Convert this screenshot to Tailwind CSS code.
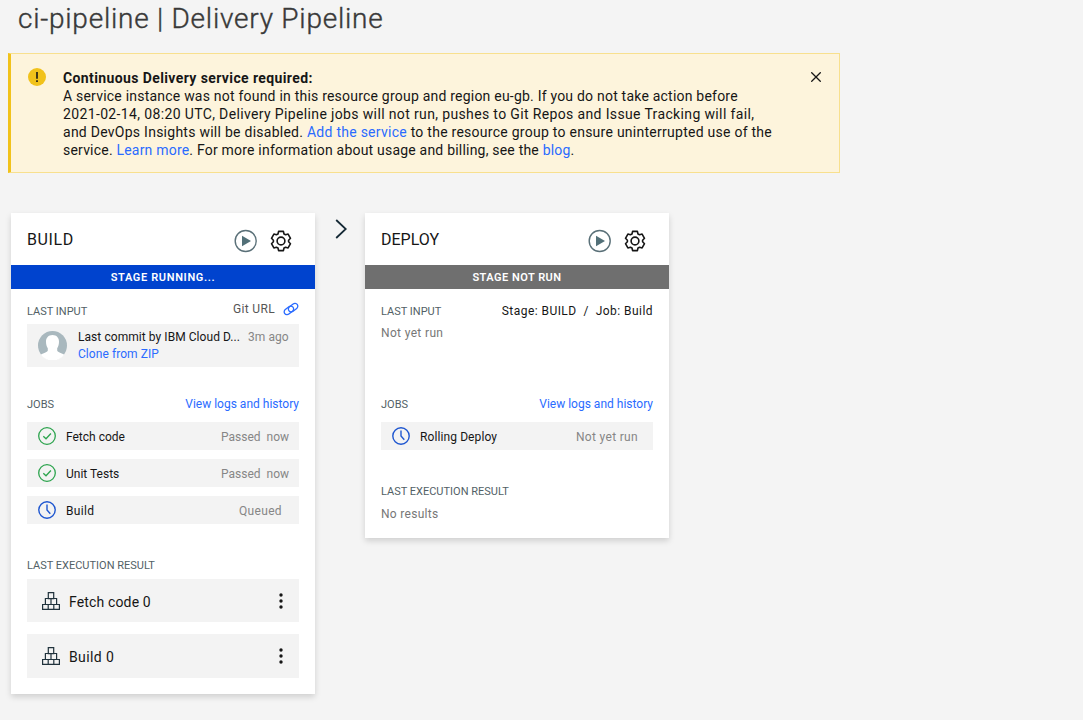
<!DOCTYPE html>
<html lang="en">
<head>
<meta charset="utf-8">
<title>ci-pipeline | Delivery Pipeline</title>
<script src="https://cdn.jsdelivr.net/npm/@tailwindcss/browser@4"></script>
</head>
<body class="h-[720px] overflow-hidden bg-[#f4f4f4] font-['Roboto',sans-serif] text-[#161616]">
<svg class="hidden">
  <symbol id="play" viewBox="0 0 24 24"><circle cx="11.700" cy="12" r="10.500" fill="none" stroke="#5a7078" stroke-width="1.400"/><path d="M8 6.800 17 12l-9 5.200z" fill="#527078"/></symbol>
  <symbol id="gear" viewBox="-12 -12 24 24"><g fill="none" stroke="#161616" stroke-width="1.600" stroke-linejoin="round"><path d="M-2.400-9.600H2.400L3-7 4.600-6.200 7.100-6.900 9.500-2.700 7.600-.8V.8L9.500 2.700 7.100 6.900 4.600 6.200 3 7 2.400 9.600H-2.400L-3 7-4.600 6.200-7.100 6.900-9.500 2.700-7.600.8V-.8L-9.500-2.700-7.100-6.900-4.600-6.200-3-7Z"/><circle r="3.900"/></g></symbol>
  <symbol id="check" viewBox="0 0 18 18"><g fill="none" stroke="#2da44e" stroke-width="1.300"><circle cx="9" cy="9" r="8.300"/><path d="M5.300 9.300 8 11.800 12.900 6.500"/></g></symbol>
  <symbol id="clock" viewBox="0 0 18 18"><g fill="none" stroke="#1f57d0" stroke-width="1.400"><circle cx="9" cy="9" r="8.200"/><path d="M9 3.500V9l3.300 3.700"/></g></symbol>
  <symbol id="boxes" viewBox="0 0 18 18"><path d="M6.300.6h5.400v6H6.300zM3.400 6.500H9v6H3.400zM9 6.500h5.600v6H9zM.6 12.500h5.600v4.900H.6zM6.200 12.500h5.600v4.900H6.200zM11.800 12.500h5.600v4.900h-5.600z" fill="none" stroke="#20323c" stroke-width="1.200"/></symbol>
  <symbol id="dots" viewBox="0 0 4 16"><g fill="#161616"><circle cx="2" cy="2" r="1.700"/><circle cx="2" cy="8" r="1.700"/><circle cx="2" cy="14" r="1.700"/></g></symbol>
</svg>

<h1 class="ml-[18px] h-[53px] pt-px text-[28px] leading-9 font-light tracking-[0.76px] text-[#393939] whitespace-nowrap [-webkit-text-stroke:0.4px]">ci-pipeline | Delivery Pipeline</h1>

<section class="ml-2 flex h-[120px] w-[832px] items-start border border-l-[3px] border-[#f8e08e] border-l-[#f1c21b] bg-[#fdf4dc]">
  <svg class="mt-3.5 ml-[17px] size-[18px] shrink-0" viewBox="0 0 18 18"><circle cx="9" cy="9" r="9" fill="#f1c21b"/><path d="M8.200 4h1.600v6.700H8.200zM8.200 12.300h1.600V14H8.200z" fill="#161616"/></svg>
  <div class="mt-[15px] ml-[17px] w-[735px] text-sm leading-[18px] whitespace-nowrap">
    <p class="font-bold tracking-[0.39px]">Continuous Delivery service required:</p>
    <p class="tracking-[0.215px]">A service instance was not found in this resource group and region eu-gb. If you do not take action before</p>
    <p class="tracking-[0.36px]">2021-02-14, 08:20 UTC, Delivery Pipeline jobs will not run, pushes to Git Repos and Issue Tracking will fail,</p>
    <p class="tracking-[0.26px]">and DevOps Insights will be disabled. <a class="text-[#2a6bff]">Add the service</a> to the resource group to ensure uninterrupted use of the</p>
    <p class="tracking-[0.205px]">service. <a class="text-[#2a6bff]">Learn more</a>. For more information about usage and billing, see the <a class="text-[#2a6bff]">blog</a>.</p>
  </div>
  <svg class="mt-[18px] ml-[13px] size-2.5" viewBox="0 0 10 10"><path d="m.3.3 9.400 9.400M9.700.3.300 9.700" stroke="#161616" stroke-width="1.300"/></svg>
</section>

<main class="mt-10 ml-[11px] flex items-start whitespace-nowrap">
  <article class="h-[481px] w-[304px] bg-white shadow-[0_3px_6px_rgba(0,0,0,0.15)]">
    <header class="flex h-[52px] items-center pr-[22px] pl-4">
      <h2 class="flex-1 pt-0.5 text-base tracking-[0.6px]">BUILD</h2>
      <svg class="mt-1 size-6"><use href="#play"/></svg>
      <svg class="mt-1 ml-[11px] size-6"><use href="#gear"/></svg>
    </header>
    <div class="h-6 bg-[#0043ce] pt-px text-center text-[11px] leading-6 font-semibold tracking-[0.65px] text-white">STAGE RUNNING...</div>
    <div class="px-4">
      <div class="flex h-[35px] items-start justify-between pt-3">
        <h3 class="mt-[3px] text-[11px] leading-4 text-[#525f66]">LAST INPUT</h3>
        <div class="flex items-center text-xs leading-4 tracking-[0.35px] text-[#565656]">Git URL
          <svg class="ml-2 h-4 w-4" viewBox="0 0 16 16" fill="none" stroke="#2a6bff" stroke-width="1.300"><rect x="-5.200" y="-2.900" width="10.400" height="5.800" rx="2.900" transform="translate(5.900 9.400) rotate(-38)"/><rect x="-5.200" y="-2.900" width="10.400" height="5.800" rx="2.900" transform="translate(10.100 6.600) rotate(-38)"/></svg>
        </div>
      </div>
      <div class="flex h-[43px] items-start bg-[#f3f3f3] pl-[11px]">
        <svg class="mt-[7px] size-[29px]" viewBox="0 0 29 29"><circle cx="14.500" cy="14.500" r="14.500" fill="#a9b8be"/><path d="M14.500 4c4.200 0 6.500 2.800 6.500 6.800 0 3-.8 5-1.800 6.500v2.200c0 1.500 4 2.200 7 4.200a14.500 14.500 0 0 1-23.400 0c3-2 7-2.700 7-4.200v-2.200C8.800 15.800 8 13.800 8 10.800 8 6.800 10.300 4 14.500 4z" fill="#fff"/></svg>
        <div class="mt-[5px] ml-[11px] text-xs leading-[17px] tracking-[0.06px]">
          <div class="flex"><span class="w-[170px]">Last commit by IBM Cloud D...</span><span class="text-[#868686]">3m ago</span></div>
          <a class="text-[#2a6bff]">Clone from ZIP</a>
        </div>
      </div>
      <div class="mt-7 flex h-[27px] justify-between">
        <h3 class="mt-0.5 text-[11px] leading-4 text-[#525f66]">JOBS</h3>
        <a class="text-xs leading-[18px] text-[#2a6bff]">View logs and history</a>
      </div>
      <div class="flex flex-col gap-[9px] text-xs">
        <div class="flex h-7 items-center bg-[#f3f3f3] pr-2.5 pl-[11px]"><svg class="mr-2.5 size-[18px]"><use href="#check"/></svg><span class="mt-0.5 flex-1">Fetch code</span><span class="mt-0.5 text-[#868686]">Passed&nbsp; now</span></div>
        <div class="flex h-7 items-center bg-[#f3f3f3] pr-2.5 pl-[11px]"><svg class="mr-2.5 size-[18px]"><use href="#check"/></svg><span class="mt-0.5 flex-1">Unit Tests</span><span class="mt-0.5 text-[#868686]">Passed&nbsp; now</span></div>
        <div class="flex h-7 items-center bg-[#f3f3f3] pr-[17px] pl-[11px]"><svg class="mr-2.5 size-[18px]"><use href="#clock"/></svg><span class="mt-0.5 flex-1 tracking-[0.3px]">Build</span><span class="mt-0.5 tracking-[0.35px] text-[#868686]">Queued</span></div>
      </div>
      <h3 class="mt-[34px] h-[21px] text-[11px] leading-4 text-[#525f66]">LAST EXECUTION RESULT</h3>
      <div class="flex h-[43px] items-center bg-[#f3f3f3] pr-4 pl-[15px] text-sm"><svg class="mr-[9px] size-[18px]"><use href="#boxes"/></svg><span class="mt-0.5 flex-1 tracking-[0.15px]">Fetch code 0</span><svg class="h-4 w-1"><use href="#dots"/></svg></div>
      <div class="mt-3 flex h-11 items-center bg-[#f3f3f3] pr-4 pl-[15px] text-sm"><svg class="mr-[9px] size-[18px]"><use href="#boxes"/></svg><span class="mt-0.5 flex-1 tracking-[0.4px]">Build 0</span><svg class="h-4 w-1"><use href="#dots"/></svg></div>
    </div>
  </article>

  <svg class="mr-[18px] ml-5 mt-1.5 h-5 w-3" viewBox="0 0 12 20"><path d="m1.200 1 9.600 9-9.600 9" fill="none" stroke="#152935" stroke-width="1.800"/></svg>

  <article class="h-[325px] w-[304px] bg-white shadow-[0_3px_6px_rgba(0,0,0,0.15)]">
    <header class="flex h-[52px] items-center pr-[22px] pl-4">
      <h2 class="flex-1 pt-0.5 text-base">DEPLOY</h2>
      <svg class="mt-1 size-6"><use href="#play"/></svg>
      <svg class="mt-1 ml-[11px] size-6"><use href="#gear"/></svg>
    </header>
    <div class="h-6 bg-[#6f6f6f] pt-px text-center text-[11px] leading-6 font-semibold tracking-[0.48px] text-white">STAGE NOT RUN</div>
    <div class="px-4">
      <div class="flex h-[35px] items-start justify-between pt-3">
        <h3 class="mt-[3px] text-[11px] leading-4 text-[#525f66]">LAST INPUT</h3>
        <div class="mt-0.5 text-xs leading-4 tracking-[0.45px]">Stage: BUILD&nbsp; /&nbsp; Job: Build</div>
      </div>
      <p class="h-[71px] text-xs leading-[18px] tracking-[0.35px] text-[#777]">Not yet run</p>
      <div class="flex h-[27px] justify-between">
        <h3 class="mt-0.5 text-[11px] leading-4 text-[#525f66]">JOBS</h3>
        <a class="text-xs leading-[18px] text-[#2a6bff]">View logs and history</a>
      </div>
      <div class="flex h-7 items-center bg-[#f3f3f3] pr-[15px] pl-[11px] text-xs"><svg class="mr-2.5 size-[18px]"><use href="#clock"/></svg><span class="mt-0.5 flex-1 tracking-[0.1px]">Rolling Deploy</span><span class="mt-0.5 tracking-[0.33px] text-[#868686]">Not yet run</span></div>
      <h3 class="mt-[34px] h-[22px] text-[11px] leading-4 text-[#525f66]">LAST EXECUTION RESULT</h3>
      <p class="text-xs leading-[17px] tracking-[0.3px] text-[#777]">No results</p>
    </div>
  </article>
</main>
</body>
</html>
